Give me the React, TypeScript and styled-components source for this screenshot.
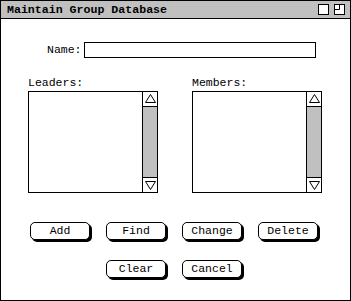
import React from "react";
import styled, { createGlobalStyle } from "styled-components";

const GlobalStyle = createGlobalStyle`
    html, body {
        margin: 0;
        padding: 0;
        background: #ffffff;
    }
    body {
        font-family: "Liberation Mono", "DejaVu Sans Mono", monospace;
    }
`

const Window = styled.div`
    width: 351px;
    height: 301px;
    box-sizing: border-box;
    border: 1px solid #000;
    background: #fff;
    display: flex;
    flex-direction: column;
`

const TitleBar = styled.div`
    height: 17px;
    background: #c0c0c0;
    border-bottom: 1px solid #000;
    display: flex;
    align-items: center;
    padding: 0 5px 0 6px;
`

const Title = styled.span`
    flex: 1;
    font-weight: bold;
    font-size: 11.6px;
    line-height: 17px;
    color: #000;
`

const TitleIcons = styled.div`
    display: flex;
    gap: 5px;
`

const Body = styled.div`
    flex: 1;
    display: flex;
    flex-direction: column;
    padding-top: 23px;
`

const NameRow = styled.div`
    display: flex;
    align-items: center;
    padding-left: 46px;
`

const Label = styled.span`
    font-size: 11.5px;
    line-height: 14px;
    color: #000;
`

const TextField = styled.div`
    margin-left: 2px;
    width: 232px;
    height: 16px;
    box-sizing: border-box;
    border: 1px solid #000;
    background: #fff;
`

const ListsRow = styled.div`
    display: flex;
    gap: 34px;
    padding-left: 27px;
    margin-top: 18px;
`

const ListColumn = styled.div`
    display: flex;
    flex-direction: column;
    gap: 1px;
`

const ListBox = styled.div`
    width: 130px;
    height: 102px;
    box-sizing: border-box;
    border: 1px solid #000;
    display: flex;
    background: #fff;
`

const ListArea = styled.div`
    flex: 1;
`

const ScrollBar = styled.div`
    width: 14px;
    border-left: 1px solid #000;
    display: flex;
    flex-direction: column;
`

const ArrowBox = styled.div<{ $down?: boolean }>`
    height: 14px;
    background: #fff;
    display: flex;
    align-items: center;
    justify-content: center;
    border-bottom: ${(p) => (p.$down ? "none" : "1px solid #000")};
    border-top: ${(p) => (p.$down ? "1px solid #000" : "none")};
`

const Track = styled.div`
    flex: 1;
    background: #c0c0c0;
`

const ButtonRow = styled.div<{ $top: number }>`
    display: flex;
    justify-content: center;
    gap: 16px;
    padding-right: 3px;
    margin-top: ${(p) => p.$top}px;
`

const Button = styled.button`
    width: 60px;
    height: 18px;
    box-sizing: border-box;
    padding: 0;
    border: 1px solid #000;
    border-radius: 5px;
    background: #fff;
    box-shadow: 2px 2px 0 #000;
    font-family: "Liberation Mono", "DejaVu Sans Mono", monospace;
    font-weight: normal;
    font-size: 11.5px;
    line-height: 16px;
    color: #000;
`

const Arrow: React.FC<{ down?: boolean }> = ({ down }) => (
    <svg width="11" height="10" viewBox="0 0 11 10">
        {down ? (
            <path d="M0.5 1.5 H10.5 L5.5 9.5 Z" fill="none" stroke="#000" strokeWidth="1" />
        ) : (
            <path d="M5.5 0.5 L10.5 8.5 H0.5 Z" fill="none" stroke="#000" strokeWidth="1" />
        )}
    </svg>
)

const ScrollList: React.FC = () => (
    <ListBox>
        <ListArea />
        <ScrollBar>
            <ArrowBox>
                <Arrow />
            </ArrowBox>
            <Track />
            <ArrowBox $down>
                <Arrow down />
            </ArrowBox>
        </ScrollBar>
    </ListBox>
)

export default function App() {
    return (
        <>
            <GlobalStyle />
            <Window>
                <TitleBar>
                    <Title>Maintain Group Database</Title>
                    <TitleIcons>
                        <svg width="11" height="11" viewBox="0 0 11 11">
                            <rect x="0.5" y="0.5" width="10" height="10" fill="#fff" stroke="#000" />
                        </svg>
                        <svg width="11" height="11" viewBox="0 0 11 11">
                            <rect x="0.5" y="0.5" width="10" height="10" fill="#fff" stroke="#000" />
                            <path d="M5.5 0.5 V5.5 H0.5" fill="none" stroke="#000" />
                        </svg>
                    </TitleIcons>
                </TitleBar>
                <Body>
                    <NameRow>
                        <Label>Name:</Label>
                        <TextField />
                    </NameRow>
                    <ListsRow>
                        <ListColumn>
                            <Label>Leaders:</Label>
                            <ScrollList />
                        </ListColumn>
                        <ListColumn>
                            <Label>Members:</Label>
                            <ScrollList />
                        </ListColumn>
                    </ListsRow>
                    <ButtonRow $top={29}>
                        <Button>Add</Button>
                        <Button>Find</Button>
                        <Button>Change</Button>
                        <Button>Delete</Button>
                    </ButtonRow>
                    <ButtonRow $top={20}>
                        <Button>Clear</Button>
                        <Button>Cancel</Button>
                    </ButtonRow>
                </Body>
            </Window>
        </>
    )
}
